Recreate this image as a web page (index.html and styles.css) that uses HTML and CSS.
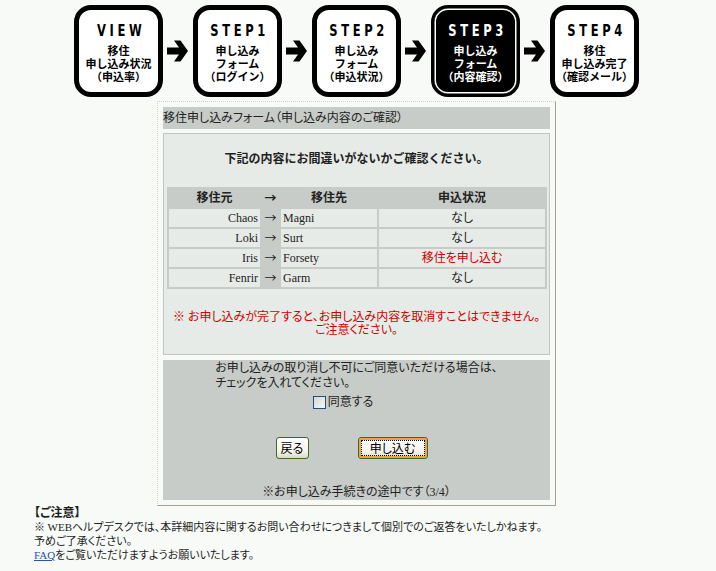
FILE: index.html
```html
<!DOCTYPE html>
<html lang="ja">
<head>
<meta charset="utf-8">
<title>移住申し込みフォーム（申し込み内容のご確認）</title>
<link rel="stylesheet" href="styles.css">
</head>
<body>
<div class="page">
  <ol class="steps">
    <li class="step"><span class="step-title">VIEW</span><span class="step-text">移住<br>申し込み状況<br>（申込率）</span></li>
    <li class="arrow"><svg width="21" height="22" viewBox="0 0 21 22"><polygon points="0,7.5 12,7.5 7,0.5 13.5,0.5 21,11 13.5,21.5 7,21.5 12,14.5 0,14.5"/></svg></li>
    <li class="step"><span class="step-title">STEP1</span><span class="step-text">申し込み<br>フォーム<br>（ログイン）</span></li>
    <li class="arrow"><svg width="21" height="22" viewBox="0 0 21 22"><polygon points="0,7.5 12,7.5 7,0.5 13.5,0.5 21,11 13.5,21.5 7,21.5 12,14.5 0,14.5"/></svg></li>
    <li class="step"><span class="step-title">STEP2</span><span class="step-text">申し込み<br>フォーム<br>（申込状況）</span></li>
    <li class="arrow"><svg width="21" height="22" viewBox="0 0 21 22"><polygon points="0,7.5 12,7.5 7,0.5 13.5,0.5 21,11 13.5,21.5 7,21.5 12,14.5 0,14.5"/></svg></li>
    <li class="step step-current"><span class="step-title">STEP3</span><span class="step-text">申し込み<br>フォーム<br>（内容確認）</span></li>
    <li class="arrow"><svg width="21" height="22" viewBox="0 0 21 22"><polygon points="0,7.5 12,7.5 7,0.5 13.5,0.5 21,11 13.5,21.5 7,21.5 12,14.5 0,14.5"/></svg></li>
    <li class="step"><span class="step-title">STEP4</span><span class="step-text">移住<br>申し込み完了<br>（確認メール）</span></li>
  </ol>

  <div class="panel">
    <div class="panel-title">移住申し込みフォーム（申し込み内容のご確認）</div>
    <div class="confirm">
      <p class="confirm-lead">下記の内容にお間違いがないかご確認ください。</p>
      <table class="moves">
        <colgroup><col class="c-from"><col class="c-arrow"><col class="c-to"><col class="c-state"></colgroup>
        <thead>
          <tr><th>移住元</th><th class="arrow-cell">→</th><th>移住先</th><th>申込状況</th></tr>
        </thead>
        <tbody>
          <tr><td class="from">Chaos</td><td class="arrow-cell">→</td><td class="to">Magni</td><td class="state">なし</td></tr>
          <tr><td class="from">Loki</td><td class="arrow-cell">→</td><td class="to">Surt</td><td class="state">なし</td></tr>
          <tr><td class="from">Iris</td><td class="arrow-cell">→</td><td class="to">Forsety</td><td class="state state-apply">移住を申し込む</td></tr>
          <tr><td class="from">Fenrir</td><td class="arrow-cell">→</td><td class="to">Garm</td><td class="state">なし</td></tr>
        </tbody>
      </table>
      <p class="warn">※ お申し込みが完了すると、お申し込み内容を取消すことはできません。<br>ご注意ください。</p>
    </div>
    <div class="agree">
      <p class="agree-text">お申し込みの取り消し不可にご同意いただける場合は、<br>チェックを入れてください。</p>
      <label class="agree-check"><input type="checkbox" class="checkbox"><span>同意する</span></label>
      <div class="buttons">
        <button type="button" class="btn btn-back">戻る</button>
        <button type="button" class="btn btn-submit"><span class="btn-focus">申し込む</span></button>
      </div>
      <p class="progress">※お申し込み手続きの途中です（3/4）</p>
    </div>
  </div>

  <div class="notice">
    <p class="notice-title">【ご注意】</p>
    <p class="notice-text">※ WEBヘルプデスクでは、本詳細内容に関するお問い合わせにつきまして個別でのご返答をいたしかねます。<br>予めご了承ください。<br><a href="#" class="faq">FAQ</a>をご覧いただけますようお願いいたします。</p>
  </div>
</div>
</body>
</html>
```

FILE: styles.css
```css
* {
  box-sizing: border-box;
}

html,
body {
  margin: 0;
  padding: 0;
}

body {
  background: #f7faf7;
  color: #1e1e1e;
  font-family: "Liberation Serif", "Noto Sans CJK JP", serif;
  font-size: 12px;
  line-height: 14px;
  font-feature-settings: "palt";
}

p {
  margin: 0;
}

.page {
  width: 645px;
  margin-left: 34px;
  padding-top: 5px;
}

/* ---------- step indicator ---------- */
.steps {
  list-style: none;
  margin: 0;
  padding: 0;
  display: flex;
  align-items: center;
  justify-content: center;
  gap: 4px;
}

.step {
  width: 89px;
  height: 92px;
  border: 5px solid #000;
  border-radius: 17px;
  background: #fff;
  color: #000;
  display: flex;
  flex-direction: column;
  align-items: center;
  text-align: center;
  padding-top: 12px;
}

.step-current {
  background: #000;
  color: #fff;
  border-width: 3px;
  padding-top: 14px;
  box-shadow: inset 0 0 0 0.5px #000, inset 0 0 0 2px #fff;
}

.step-title {
  font-family: "DejaVu Sans Condensed", "DejaVu Sans", sans-serif;
  font-stretch: condensed;
  font-weight: 700;
  font-size: 16px;
  line-height: 18px;
  letter-spacing: 4.5px;
  margin-right: -4.5px;
  transform: scaleX(0.8);
  font-feature-settings: normal;
}

.step-text {
  font-family: "Noto Sans CJK JP", sans-serif;
  font-weight: 700;
  font-size: 11px;
  line-height: 13px;
  margin-top: 4px;
  font-feature-settings: normal;
}

.arrow {
  display: flex;
  margin-right: 1px;
}

.arrow svg {
  display: block;
  fill: #000;
}

/* ---------- panel ---------- */
.panel {
  width: 399px;
  margin: 4px auto 0;
  background: #f7faf7;
  border-top: 1px dotted #d6d2bc;
  border-left: 1px dotted #d6d2bc;
  border-right: 1px solid #a6a28e;
  border-bottom: 1px solid #a6a28e;
  padding: 5px;
}

.panel-title {
  height: 22px;
  line-height: 22px;
  background: #c8ccc8;
  color: #222;
}

.confirm {
  margin-top: 4px;
  background: #e7ebe7;
  border: 1px solid #c2c6c2;
  padding: 17px 3px 17px;
}

.confirm-lead {
  text-align: center;
  font-weight: 700;
  line-height: 16px;
  font-feature-settings: normal;
  color: #222;
}

.moves {
  width: 378px;
  margin: 20px auto 0;
  border-collapse: collapse;
  table-layout: fixed;
}

.c-from { width: 93px; }
.c-arrow { width: 19px; }
.c-to { width: 98px; }
.c-state { width: 168px; }

.moves th,
.moves td {
  height: 20px;
  padding: 0 2px;
  line-height: 16px;
  border: 2px solid #c8ccc8;
  color: #222;
  white-space: nowrap;
}

.moves th {
  background: #c8ccc8;
  font-weight: 700;
  text-align: center;
  font-feature-settings: normal;
}

.moves td {
  background: #e7ebe7;
}

.moves .arrow-cell {
  background: #c8ccc8;
  text-align: center;
  padding: 0;
  font-family: "Noto Sans CJK JP", sans-serif;
  font-feature-settings: normal;
}

.moves .from {
  text-align: right;
}

.moves .to {
  text-align: left;
}

.moves .state {
  text-align: center;
}

.moves .state-apply {
  color: #cc0000;
}

.warn {
  margin-top: 22px;
  text-align: center;
  line-height: 13px;
  color: #cc0000;
}

/* ---------- agreement ---------- */
.agree {
  margin-top: 5px;
  background: #c8ccc8;
  padding-top: 1px;
  color: #222;
}

.agree-text {
  width: fit-content;
  margin: 0 auto;
  line-height: 15px;
}

.agree-check {
  display: flex;
  justify-content: center;
  align-items: center;
  height: 16px;
  margin-top: 3px;
  padding-right: 27px;
}

.checkbox {
  appearance: none;
  -webkit-appearance: none;
  width: 13px;
  height: 13px;
  margin: 0 2px 0 0;
  border: 1px solid #1c5180;
  background: linear-gradient(135deg, #d8d8d2, #f6f6f4);
}

.buttons {
  display: flex;
  justify-content: center;
  gap: 49px;
  margin-top: 27px;
  padding-right: 10px;
}

.btn {
  height: 22px;
  padding: 0;
  border: 1px solid #3f6a1f;
  border-radius: 3px;
  background: linear-gradient(#ffffff, #f4f2ea 70%, #dcd8c8);
  color: #000;
  font-family: "Noto Sans CJK JP", sans-serif;
  font-size: 12px;
  line-height: 16px;
  font-feature-settings: "palt";
}

.btn-back {
  width: 33px;
}

.btn-submit {
  width: 70px;
  padding: 2px;
  box-shadow: inset 0 0 0 2px #eda24a;
}

.btn-focus {
  display: block;
  height: 16px;
  border: 1px dotted #000;
  line-height: 14px;
}

.progress {
  margin-top: 26px;
  text-align: center;
  line-height: 15px;
}

/* ---------- notice ---------- */
.notice {
  color: #1e1e1e;
  font-size: 11px;
  line-height: 14px;
}

.notice-title {
  font-size: 12px;
  font-weight: 700;
}

.faq {
  color: #2455a4;
  text-decoration: underline;
}
```
